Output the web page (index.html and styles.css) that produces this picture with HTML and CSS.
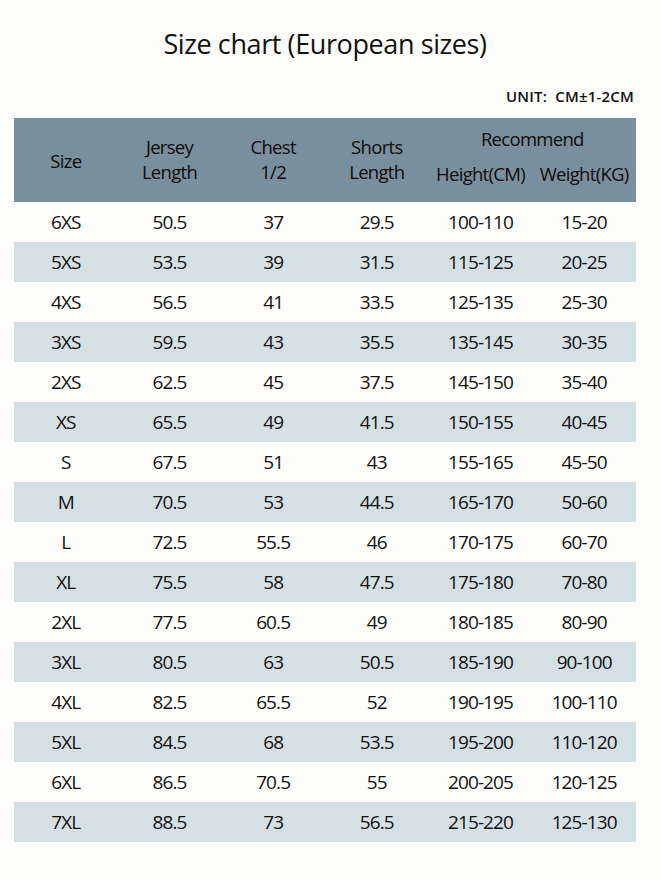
FILE: index.html
```
<!DOCTYPE html>
<html>
<head>
<meta charset="utf-8">
<link rel="stylesheet" href="styles.css">
</head>
<body>
<div class="page">
  <h1 class="title">Size chart (European sizes)</h1>
  <div class="unit">UNIT:&nbsp; CM±1-2CM</div>
  <div class="table">
    <div class="head">
      <div class="hcell single">Size</div>
      <div class="hcell">Jersey<br>Length</div>
      <div class="hcell">Chest<br>1/2</div>
      <div class="hcell">Shorts<br>Length</div>
      <div class="hrec">
        <div class="rec">Recommend</div>
        <div class="recsub"><span>Height(CM)</span><span>Weight(KG)</span></div>
      </div>
    </div>
    <div class="row"><span>6XS</span><span>50.5</span><span>37</span><span>29.5</span><span>100-110</span><span>15-20</span></div>
    <div class="row alt"><span>5XS</span><span>53.5</span><span>39</span><span>31.5</span><span>115-125</span><span>20-25</span></div>
    <div class="row"><span>4XS</span><span>56.5</span><span>41</span><span>33.5</span><span>125-135</span><span>25-30</span></div>
    <div class="row alt"><span>3XS</span><span>59.5</span><span>43</span><span>35.5</span><span>135-145</span><span>30-35</span></div>
    <div class="row"><span>2XS</span><span>62.5</span><span>45</span><span>37.5</span><span>145-150</span><span>35-40</span></div>
    <div class="row alt"><span>XS</span><span>65.5</span><span>49</span><span>41.5</span><span>150-155</span><span>40-45</span></div>
    <div class="row"><span>S</span><span>67.5</span><span>51</span><span>43</span><span>155-165</span><span>45-50</span></div>
    <div class="row alt"><span>M</span><span>70.5</span><span>53</span><span>44.5</span><span>165-170</span><span>50-60</span></div>
    <div class="row"><span>L</span><span>72.5</span><span>55.5</span><span>46</span><span>170-175</span><span>60-70</span></div>
    <div class="row alt"><span>XL</span><span>75.5</span><span>58</span><span>47.5</span><span>175-180</span><span>70-80</span></div>
    <div class="row"><span>2XL</span><span>77.5</span><span>60.5</span><span>49</span><span>180-185</span><span>80-90</span></div>
    <div class="row alt"><span>3XL</span><span>80.5</span><span>63</span><span>50.5</span><span>185-190</span><span>90-100</span></div>
    <div class="row"><span>4XL</span><span>82.5</span><span>65.5</span><span>52</span><span>190-195</span><span>100-110</span></div>
    <div class="row alt"><span>5XL</span><span>84.5</span><span>68</span><span>53.5</span><span>195-200</span><span>110-120</span></div>
    <div class="row"><span>6XL</span><span>86.5</span><span>70.5</span><span>55</span><span>200-205</span><span>120-125</span></div>
    <div class="row alt"><span>7XL</span><span>88.5</span><span>73</span><span>56.5</span><span>215-220</span><span>125-130</span></div>
  </div>
</div>
</body>
</html>
```

FILE: styles.css
```
html, body {
  margin: 0;
  padding: 0;
  background: #fdfdfb;
}
.page {
  width: 660px;
  height: 880px;
  padding: 0 24px 0 14px;
  box-sizing: border-box;
  font-family: "Open Sans", "Noto Sans", sans-serif;
  color: #111111;
}
.title {
  margin: 0;
  padding-top: 26px;
  height: 60px;
  box-sizing: border-box;
  text-align: center;
  font-weight: 400;
  font-size: 27px;
  line-height: 36px;
  letter-spacing: -0.4px;
}
.unit {
  text-align: right;
  font-size: 15px;
  font-weight: 600;
  line-height: 20px;
  margin-top: 26px;
  height: 32px;
  letter-spacing: 0.2px;
  padding-right: 2px;
}
.table {
  width: 622px;
}
.head {
  display: grid;
  grid-template-columns: repeat(4, 1fr) 2fr;
  height: 84px;
  background: #7a8f9e;
  font-size: 18.5px;
  letter-spacing: -0.7px;
  line-height: 25px;
  color: #0c0c0c;
}
.hcell {
  display: flex;
  align-items: center;
  justify-content: center;
  text-align: center;
  padding-bottom: 2px;
}
.hcell.single {
  padding-bottom: 0;
}
.hrec {
  display: flex;
  flex-direction: column;
  padding-top: 8px;
}
.rec {
  text-align: center;
  line-height: 26px;
}
.recsub {
  display: grid;
  grid-template-columns: 1fr 1fr;
  margin-top: 9px;
  text-align: center;
}
.row {
  display: grid;
  grid-template-columns: repeat(6, 1fr);
  height: 40px;
  align-items: center;
  text-align: center;
  font-size: 19px;
  letter-spacing: -0.9px;
}
.row.alt {
  background: #d5e0e5;
}
```
